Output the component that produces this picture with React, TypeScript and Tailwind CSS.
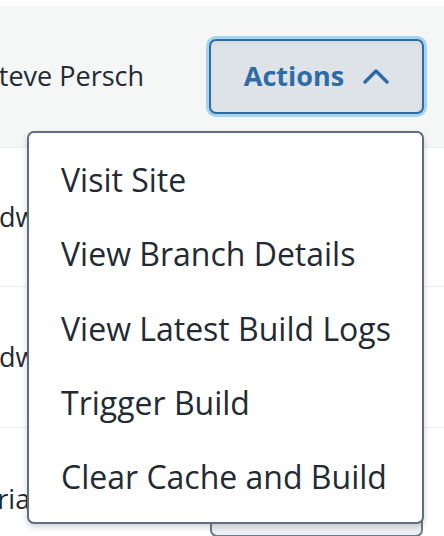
const font = { fontFamily: '"Open Sans", "Noto Sans", sans-serif' }

const items = ['Visit Site', 'View Branch Details', 'View Latest Build Logs', 'Trigger Build', 'Clear Cache and Build']

export default function App() {
  return (
    <div className="relative w-[444px] h-[536px] overflow-hidden bg-white text-[#222b33]" style={font}>
      <div className="h-[6px]" />

      {/* row 1 - active */}
      <div className="flex items-center h-[142px] bg-[#f5f7f7] border-b border-[#eceff0]">
        <span className="-ml-[16px] text-[27px] whitespace-nowrap">Steve Persch</span>
        <button
          type="button"
          className="ml-auto mr-[20px] w-[215px] h-[75px] flex items-center justify-center gap-[19px] rounded-[7px] border-2 border-[#2f6ca6] bg-[#dde3e7] ring-[3px] ring-[#a3d5ee] shadow-inner text-[#2f6ca6]"
        >
          <span className="text-[27px] font-bold">Actions</span>
          <svg width="26" height="16" viewBox="0 0 26 16" fill="none" className="mb-[2px]">
            <polyline points="2,14 13,3 24,14" stroke="currentColor" strokeWidth="3.5" strokeLinecap="round" strokeLinejoin="round" />
          </svg>
        </button>
      </div>

      {/* row 2 */}
      <div className="flex items-center h-[139px] border-b border-[#eceff0]">
        <span className="-ml-[16px] text-[27px] whitespace-nowrap">Edwards</span>
      </div>

      {/* row 3 */}
      <div className="flex items-center h-[141px] border-b border-[#eceff0]">
        <span className="-ml-[16px] text-[27px] whitespace-nowrap">Edwards</span>
      </div>

      {/* row 4 */}
      <div className="flex items-center h-[140px] pt-[2px]">
        <span className="-ml-[42px] text-[27px] whitespace-nowrap">Maria Lopez</span>
        <div className="ml-auto mr-[21px] w-[213px] h-[75px] rounded-[7px] border-2 border-[#6b7b8b] bg-[#eef1f3]" />
      </div>

      {/* dropdown menu */}
      <div className="absolute left-[27px] top-[131px] w-[397px] h-[393px] rounded-[7px] border-2 border-[#5f6f80] bg-white shadow-[0_3px_6px_rgba(0,0,0,0.18)] pt-[10px]">
        {items.map((it) => (
          <div key={it} className="h-[74.3px] flex items-center pl-[32px] text-[32px] whitespace-nowrap">
            {it}
          </div>
        ))}
      </div>
    </div>
  )
}
